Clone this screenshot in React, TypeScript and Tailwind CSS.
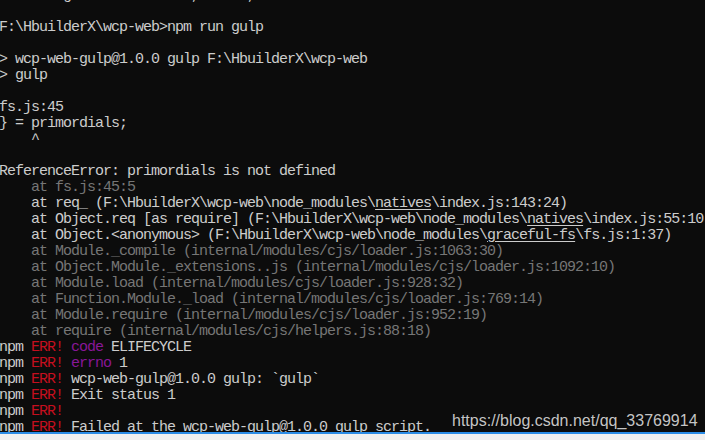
import React from "react";

type Seg = { t: string; c?: string; u?: boolean };
type Line = Seg[];

const W = "text-[#cccccc]";
const G = "text-[#767676]";
const R = "text-[#c50f1f]";
const M = "text-[#881798]";

const lines: Line[] = [
  [{ t: "        g               ,      ,", c: W }],
  [{ t: "", c: W }],
  [{ t: "F:\\HbuilderX\\wcp-web>npm run gulp", c: W }],
  [{ t: "", c: W }],
  [{ t: "> wcp-web-gulp@1.0.0 gulp F:\\HbuilderX\\wcp-web", c: W }],
  [{ t: "> gulp", c: W }],
  [{ t: "", c: W }],
  [{ t: "fs.js:45", c: W }],
  [{ t: "} = primordials;", c: W }],
  [{ t: "    ^", c: W }],
  [{ t: "", c: W }],
  [{ t: "ReferenceError: primordials is not defined", c: W }],
  [{ t: "    at fs.js:45:5", c: G }],
  [
    { t: "    at req_ (F:\\HbuilderX\\wcp-web\\node_modules\\", c: W },
    { t: "natives", c: W, u: true },
    { t: "\\index.js:143:24)", c: W },
  ],
  [
    { t: "    at Object.req [as require] (F:\\HbuilderX\\wcp-web\\node_modules\\", c: W },
    { t: "natives", c: W, u: true },
    { t: "\\index.js:55:10)", c: W },
  ],
  [
    { t: "    at Object.<anonymous> (F:\\HbuilderX\\wcp-web\\node_modules\\", c: W },
    { t: "graceful-fs", c: W, u: true },
    { t: "\\fs.js:1:37)", c: W },
  ],
  [{ t: "    at Module._compile (internal/modules/cjs/loader.js:1063:30)", c: G }],
  [{ t: "    at Object.Module._extensions..js (internal/modules/cjs/loader.js:1092:10)", c: G }],
  [{ t: "    at Module.load (internal/modules/cjs/loader.js:928:32)", c: G }],
  [{ t: "    at Function.Module._load (internal/modules/cjs/loader.js:769:14)", c: G }],
  [{ t: "    at Module.require (internal/modules/cjs/loader.js:952:19)", c: G }],
  [{ t: "    at require (internal/modules/cjs/helpers.js:88:18)", c: G }],
  [
    { t: "npm ", c: W },
    { t: "ERR!", c: R },
    { t: " ", c: W },
    { t: "code", c: M },
    { t: " ELIFECYCLE", c: W },
  ],
  [
    { t: "npm ", c: W },
    { t: "ERR!", c: R },
    { t: " ", c: W },
    { t: "errno", c: M },
    { t: " 1", c: W },
  ],
  [
    { t: "npm ", c: W },
    { t: "ERR!", c: R },
    { t: " wcp-web-gulp@1.0.0 gulp: `gulp`", c: W },
  ],
  [
    { t: "npm ", c: W },
    { t: "ERR!", c: R },
    { t: " Exit status 1", c: W },
  ],
  [
    { t: "npm ", c: W },
    { t: "ERR!", c: R },
  ],
  [
    { t: "npm ", c: W },
    { t: "ERR!", c: R },
    { t: " Failed at the wcp-web-gulp@1.0.0 gulp script.", c: W },
  ],
];

export default function App() {
  return (
    <div className="w-[705px] h-[440px] flex flex-col bg-[#f0f0f0] overflow-hidden">
      <div className="relative h-[434px] shrink-0 bg-[#0c0c0c] overflow-hidden border-b-2 border-[#2b8ce6]">
        <div
          className="flex flex-col -mt-[12px] -ml-[1px] text-[15px] leading-[16px] tracking-[-1px] whitespace-pre"
          style={{ fontFamily: '"Liberation Mono", "DejaVu Sans Mono", monospace' }}
        >
          {lines.map((ln, i) => (
            <div key={i} className="h-4 whitespace-pre">
              {ln.map((s, j) => (
                <span
                  key={j}
                  className={`${s.c ?? W} ${s.u ? "underline underline-offset-2" : ""}`}
                >
                  {s.t}
                </span>
              ))}
              {"\u200b"}
            </div>
          ))}
        </div>
        <div
          className="absolute left-[452px] top-[411px] text-[16px] leading-[20px] text-[#c4c4c4] [text-shadow:1px_1px_1px_rgba(0,0,0,0.6)]"
          style={{ fontFamily: '"Liberation Sans", Arial, sans-serif' }}
        >
          https://blog.csdn.net/qq_33769914
        </div>
      </div>
    </div>
  );
}
